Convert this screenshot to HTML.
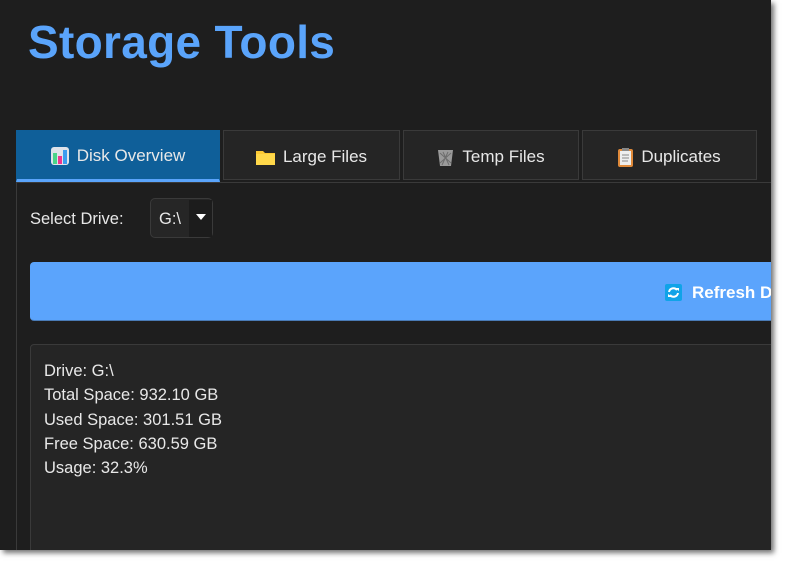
<!DOCTYPE html>
<html><head><style>
body{margin:0;width:786px;height:565px;background:#fff;overflow:hidden;font-family:"Liberation Sans",sans-serif;position:relative}
.win{position:absolute;left:0;top:0;width:771px;height:550px;background:#1e1e1e;box-shadow:3px 3px 5px rgba(0,0,0,.55);overflow:hidden}
.title{position:absolute;left:28px;top:15px;font-size:46px;font-weight:bold;color:#5aa4fb;letter-spacing:0.3px}
.tab{position:absolute;top:130px;height:50px;background:#252525;border:1px solid #3a3a3a;box-sizing:border-box;color:#e8e8e8;font-size:17px;display:flex;align-items:center;justify-content:center;gap:8px;padding-top:4px}
.tab.a{background:#0f5f99;border-color:#0f5f99;border-bottom:3px solid #5aa4fb;height:52px;padding-top:2px}
.pane{position:absolute;left:16px;top:182px;width:760px;height:380px;border-left:1px solid #3a3a3a;border-top:1px solid #3a3a3a}
.lbl{position:absolute;left:30px;top:210px;color:#e8e8e8;font-size:16.5px}
.combo{position:absolute;left:150px;top:198px;width:63px;height:40px;border:1px solid #3a3a3a;border-radius:5px;background:#262626;box-sizing:border-box}
.btn{position:absolute;left:30px;top:262px;width:760px;height:59px;background:#5ba4fc;border-radius:4px;border-bottom:1px solid #4a7bb5;box-sizing:border-box}
.box{position:absolute;left:30px;top:344px;width:760px;height:230px;background:#252525;border:1px solid #3a3a3a;border-radius:4px;box-sizing:border-box;padding:14px 13px;color:#e8e8e8;font-size:16.5px;line-height:24.3px}
</style></head><body>
<div class="win">
<div class="title">Storage Tools</div>
<div class="pane"></div>
<div class="tab a" style="left:16px;width:204px"><svg width="18" height="18"><rect x="0" y="0" width="18" height="18" rx="3" fill="#dfe3ea"/><rect x="2" y="6" width="4" height="11" fill="#4bd48a"/><rect x="7" y="9" width="4" height="8" fill="#f0358e"/><rect x="12" y="3" width="4" height="14" fill="#3a9cf0"/></svg>Disk Overview</div>
<div class="tab" style="left:223px;width:177px"><svg width="19" height="16"><path d="M0 2h7l2 2h10v12H0z" fill="#fcc934"/><path d="M0 5h19v11H0z" fill="#ffd84a"/></svg>Large Files</div>
<div class="tab" style="left:403px;width:176px"><svg width="17" height="17"><path d="M1 1h15l-2 16H3z" fill="#9a9a9a"/><path d="M3 4l11 10M14 4L3 14M6 3l6 13M11 3L5 16" stroke="#6d6d6d" stroke-width="1"/></svg>Temp Files</div>
<div class="tab" style="left:582px;width:175px"><svg width="15" height="19"><rect x="0" y="1" width="15" height="18" rx="2" fill="#e08a3a"/><rect x="2" y="3" width="11" height="14" fill="#eee"/><rect x="4" y="0" width="7" height="3" fill="#888"/><path d="M4 7h7M4 10h7M4 13h6" stroke="#888"/></svg>Duplicates</div>
<div class="lbl">Select Drive:</div>
<div class="combo"><span style="position:absolute;left:8px;top:11px;color:#e8e8e8;font-size:16.5px">G:\</span><div style="position:absolute;left:38px;top:1px;width:23px;height:37px;background:#1c1c1c"></div><div style="position:absolute;left:45px;top:15px;border-left:5px solid transparent;border-right:5px solid transparent;border-top:6px solid #fff"></div></div>
<div class="btn"><svg style="position:absolute;left:635px;top:22px" width="17" height="17"><rect width="17" height="17" rx="2" fill="#10a3e8"/><path d="M4 8a4.5 4.5 0 0 1 8-2M13 9a4.5 4.5 0 0 1-8 2" stroke="#fff" stroke-width="2" fill="none"/><path d="M10 4h4v3zM7 13H3v-3z" fill="#fff"/></svg><span style="position:absolute;left:662px;top:21px;color:#fff;font-weight:bold;font-size:17px;white-space:nowrap">Refresh Disk Info</span></div>
<div class="box">Drive: G:\<br>Total Space: 932.10 GB<br>Used Space: 301.51 GB<br>Free Space: 630.59 GB<br>Usage: 32.3%</div>
</div>
</body></html>
